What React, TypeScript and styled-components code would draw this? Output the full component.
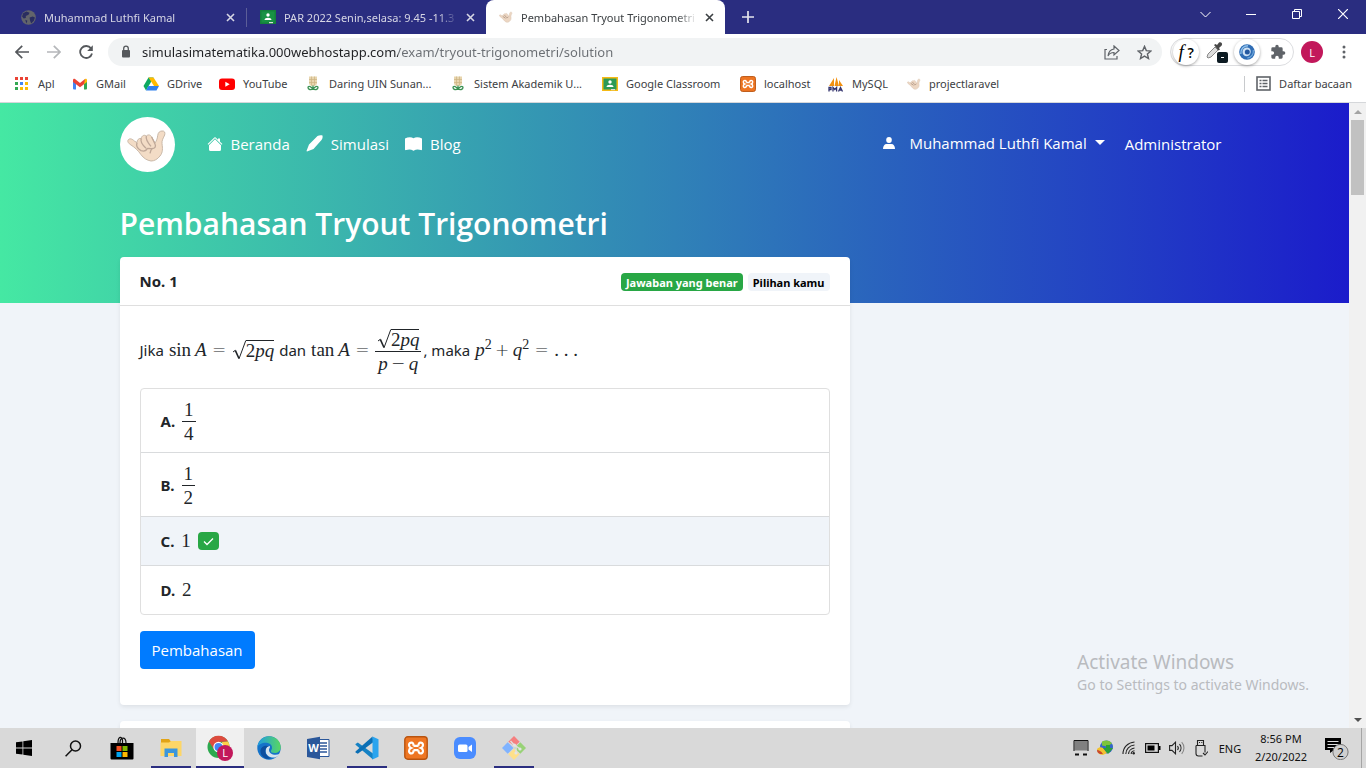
import React from "react";
import styled, { createGlobalStyle, css } from "styled-components";

const UI = `"Open Sans", "Noto Sans", sans-serif`;
const SMALL = `"Noto Sans", "Open Sans", sans-serif`;
const MATH = `"Liberation Serif", serif`;

const GlobalStyle = createGlobalStyle`
  *, *::before, *::after { box-sizing: border-box; }
  html, body, #root { height: 100%; }
  body { margin: 0; overflow: hidden; font-family: ${UI}; color: #212529; }
  button { font: inherit; color: inherit; background: none; border: 0; padding: 0; }
  a { color: inherit; text-decoration: none; }
  svg { display: block; flex: none; }
`;

/* ---------- shell ---------- */
const Screen = styled.div`
  display: flex;
  flex-direction: column;
  height: 100vh;
  min-height: 0;
`;

/* ---------- tab strip ---------- */
const TabStrip = styled.header`
  display: flex;
  flex: none;
  height: 34px;
  padding-left: 8px;
  background: #2a2d80;
  font-family: ${SMALL};
`;
const Tab = styled.div<{ $active?: boolean; $divided?: boolean }>`
  display: flex;
  align-items: center;
  flex: 0 1 239px;
  min-width: 0;
  height: 34px;
  padding: 0 11px 0 13px;
  gap: 8px;
  font-size: 11px;
  color: #d6d6e4;
  border-right: ${(p) => (p.$divided ? "1px solid #56589a" : "0")};
  border-image: ${(p) => (p.$divided ? "linear-gradient(#2a2d80 24%, #5c5e98 24%, #5c5e98 78%, #2a2d80 78%) 1" : "none")};
  ${(p) =>
    p.$active &&
    css`
      background: #fff;
      color: #3c4043;
      border-radius: 8px 8px 0 0;
    `}
`;
const TabTitle = styled.button`
  flex: 1;
  min-width: 0;
  text-align: left;
  white-space: nowrap;
  overflow: hidden;
  mask-image: linear-gradient(90deg, #000 calc(100% - 20px), transparent);
`;
const IconButton = styled.button<{ $w?: number }>`
  display: flex;
  align-items: center;
  justify-content: center;
  flex: none;
  width: ${(p) => p.$w ?? 32}px;
`;
const WindowControls = styled.div`
  display: flex;
  height: 28px;
  margin-left: auto;
  color: #fff;
`;

/* ---------- toolbar ---------- */
const Toolbar = styled.div`
  display: flex;
  align-items: center;
  flex: none;
  height: 36px;
  padding: 0 6px;
  background: #fff;
  color: #5f6368;
`;
const Omnibox = styled.label`
  display: flex;
  align-items: center;
  flex: 1;
  height: 28px;
  margin: 0 8px 0 6px;
  padding: 0 2px 0 12px;
  border-radius: 14px;
  background: #f1f3f4;
`;
const Url = styled.input`
  flex: 1;
  min-width: 0;
  margin-left: 10px;
  padding: 0;
  border: 0;
  outline: 0;
  font: 13px ${SMALL};
  color: transparent;
  background: linear-gradient(90deg, #202124 256px, #6a6e73 256px);
  background-clip: text;
  -webkit-background-clip: text;
`;
const Extensions = styled.div`
  display: flex;
  align-items: center;
  justify-content: space-around;
  width: 124px;
  height: 28px;
  margin-right: 2px;
  border: 1px solid #dcdde0;
  border-radius: 14px;
`;
const ExtButton = styled.button<{ $raised?: boolean }>`
  display: flex;
  align-items: center;
  justify-content: center;
  width: 26px;
  height: 26px;
  border-radius: 50%;
  box-shadow: ${(p) => (p.$raised ? "0 1px 3px rgba(0,0,0,.35)" : "none")};
`;
const FontMark = styled.span`
  color: #000;
  font: 600 14px/26px ${UI};
`;
const FontMarkF = styled.i`
  font: italic 400 19px/26px ${MATH};
`;
const Avatar = styled.span`
  display: flex;
  align-items: center;
  justify-content: center;
  width: 22px;
  height: 22px;
  border-radius: 50%;
  background: #c2185b;
  color: #fff;
  font-size: 11px;
`;

/* ---------- bookmarks ---------- */
const Bookmarks = styled.nav`
  display: flex;
  align-items: center;
  flex: none;
  height: 33px;
  padding: 0 14px 5px;
  background: #fff;
  border-bottom: 1px solid #d5d7da;
  font-family: ${SMALL};
  font-size: 11px;
  color: #3c4043;
`;
const Bookmark = styled.a<{ $w: number }>`
  display: flex;
  align-items: center;
  gap: 8px;
  flex: 0 1 ${(p) => p.$w}px;
  white-space: nowrap;
`;
const ReadingList = styled.button`
  display: flex;
  align-items: center;
  gap: 8px;
  height: 16px;
  margin-left: auto;
  padding-left: 11px;
  border-left: 1px solid #c8cacd;
  white-space: nowrap;
`;

/* ---------- page ---------- */
const Viewport = styled.div`
  position: relative;
  display: flex;
  flex: 1;
  min-height: 0;
  background: #f0f4f9;
`;
const Page = styled.main`
  flex: 1;
  min-width: 0;
  overflow: hidden;
  background: linear-gradient(90deg, #45e8a3, #1b1ccb) top / 100% 200px no-repeat;
`;
const Container = styled.div`
  max-width: 1140px;
  margin: 0 auto;
  padding: 14px 15px 0;
`;
const SiteNav = styled.nav`
  display: flex;
  align-items: center;
  height: 55px;
  padding-right: 8px;
  color: #fff;
  font-size: 15px;
`;
const Logo = styled.a`
  width: 55px;
  height: 55px;
  margin-right: 32px;
  border-radius: 50%;
  background: #fff;
  overflow: hidden;
`;
const NavLink = styled.a`
  display: flex;
  align-items: center;
  gap: 8px;
  margin-right: 16px;
  padding-bottom: 2px;
`;
const PlainLink = styled.a`
  padding-bottom: 2px;
`;
const UserButton = styled.button`
  display: flex;
  align-items: center;
  margin: 0 20px 0 auto;
  padding-bottom: 4px;
  gap: 14px;
`;
const Caret = styled.span`
  margin-left: -6px;
  border: 5px solid transparent;
  border-top-color: #fff;
  border-bottom: 0;
`;
const Title = styled.h1`
  margin: 32px 0 14px;
  font-size: 30px;
  line-height: 39px;
  font-weight: 600;
  color: #fff;
`;
const Card = styled.section`
  max-width: 730px;
  margin-bottom: 16px;
  border-radius: 4px;
  background: #fff;
  box-shadow: 0 2px 4px rgba(0, 0, 0, 0.08);
`;
const CardHeader = styled.header`
  display: flex;
  align-items: center;
  gap: 5px;
  height: 49px;
  padding: 2px 20px 0;
  border-bottom: 1px solid #dfdfdf;
`;
const Number = styled.h2`
  margin: 0 auto 0 0;
  padding-bottom: 2px;
  font: 700 15px ${SMALL};
`;
const Badge = styled.span<{ $success?: boolean }>`
  display: inline-flex;
  align-items: center;
  height: 18px;
  padding: 0 5px;
  border-radius: 4px;
  font: 700 11px ${SMALL};
  color: ${(p) => (p.$success ? "#fff" : "#000")};
  background: ${(p) => (p.$success ? "#28a745" : "#f0f4f9")};
`;
const CardBody = styled.div`
  padding: 22px 20px 36px;
`;
const Question = styled.p`
  display: flex;
  align-items: center;
  gap: 5px;
  height: 44px;
  margin: 0 0 16px;
  font: 15px ${SMALL};
  white-space: nowrap;
`;
const Phrase = styled.span`
  display: inline-flex;
  align-items: center;
  gap: 2px;
`;
const Choices = styled.ol`
  margin: 0 0 16px;
  padding: 0;
  list-style: none;
  border: 1px solid #dfdfdf;
  border-radius: 4px;
`;
const Choice = styled.li<{ $chosen?: boolean }>`
  display: flex;
  align-items: center;
  gap: 7px;
  min-height: 48px;
  padding: 10px 20px;
  font: 15px ${SMALL};
  background: ${(p) => (p.$chosen ? "#f0f4f9" : "transparent")};
  & + & { border-top: 1px solid #d9dbdd; min-height: 49px; }
`;
const Primary = styled.button`
  display: block;
  height: 38px;
  padding: 0 12px;
  border-radius: 4px;
  background: #007bff;
  color: #fff;
  font-size: 15px;
`;

/* ---------- math ---------- */
const MathRun = styled.span`
  display: inline-flex;
  align-items: center;
  font: 19px/24px ${MATH};
`;
const Op = styled.span<{ $binary?: boolean }>`
  width: 15px;
  margin: 0 ${(p) => (p.$binary ? 3 : 5)}px;
  font: 200 17px/24px "DejaVu Sans", sans-serif;
  text-align: center;
`;
const Fn = styled.span`
  margin-right: 4px;
`;
const Sup = styled.sup`
  align-self: flex-start;
  font-size: 14px;
  line-height: 14px;
`;
const FracBox = styled.span`
  display: inline-flex;
  flex-direction: column;
  align-items: center;
  font: 19px/19px ${MATH};
`;
const FracPart = styled.span<{ $bottom?: boolean }>`
  display: flex;
  align-items: center;
  justify-content: center;
  align-self: stretch;
  height: ${(p) => (p.$bottom ? 21 : 22)}px;
  padding: ${(p) => (p.$bottom ? "3px 2px 0" : "0 2px 2px")};
  border-top: ${(p) => (p.$bottom ? "1px solid #212529" : "0")};
`;
const Root = styled.span`
  display: inline-flex;
`;
const Radicand = styled.span`
  border-top: 1px solid #212529;
  height: 20px;
  line-height: 19px;
`;
const MinusOp = styled(Op)`
  line-height: 19px;
`;

const Sqrt = ({ children }: { children: React.ReactNode }) => (
  <Root>
    <svg width="14" height="20" viewBox="0 0 14 20" fill="none" stroke="#212529">
      <path d="M1 12 3.300 10.300" strokeWidth="1" />
      <path d="M3.300 10.300 7 18.500" strokeWidth="1.600" />
      <path d="M7 18.800 13.800.5" strokeWidth="1" />
    </svg>
    <Radicand>{children}</Radicand>
  </Root>
);
const Frac = ({ top, bottom }: { top: React.ReactNode; bottom: React.ReactNode }) => (
  <FracBox>
    <FracPart>{top}</FracPart>
    <FracPart $bottom>{bottom}</FracPart>
  </FracBox>
);

/* ---------- scrollbar & watermark ---------- */
const Scrollbar = styled.div`
  display: flex;
  flex-direction: column;
  align-items: center;
  flex: none;
  width: 17px;
  background: #f1f1f1;
`;
const ScrollArrow = styled.button`
  display: flex;
  align-items: center;
  justify-content: center;
  width: 17px;
  height: 17px;
`;
const Thumb = styled.div`
  width: 13px;
  height: 75px;
  margin-bottom: auto;
  background: #c1c1c1;
`;
const Watermark = styled.aside`
  position: absolute;
  right: 57px;
  bottom: 33px;
  color: #b9bbbf;
  font: 14px/20px ${SMALL};
`;
const WatermarkTitle = styled.div`
  font-size: 19px;
  line-height: 25px;
`;

/* ---------- taskbar ---------- */
const Taskbar = styled.footer`
  display: flex;
  flex: none;
  gap: 1px;
  height: 40px;
  background: #d9d9d9;
  color: #111;
  font-family: ${SMALL};
`;
const Task = styled.button<{ $active?: boolean; $open?: boolean }>`
  display: flex;
  align-items: center;
  justify-content: center;
  width: 48px;
  height: 40px;
  background: ${(p) => (p.$active ? "#f0f0f0" : p.$open ? "linear-gradient(#2b2e80, #2b2e80) bottom / 40px 2px no-repeat" : "none")};
  box-shadow: ${(p) => (p.$active ? "inset 0 -2px #2b2e80" : "none")};
`;
const Tray = styled.div`
  display: flex;
  align-items: center;
  margin-left: auto;
  font-size: 11px;
`;
const TrayButton = styled.button`
  display: flex;
  align-items: center;
  justify-content: center;
  width: 24px;
  height: 40px;
`;
const Lang = styled.button`
  width: 34px;
`;
const Clock = styled.time`
  width: 68px;
  text-align: center;
  line-height: 18px;
  padding-bottom: 1px;
`;
const Notify = styled.button`
  display: flex;
  justify-content: center;
  align-items: center;
  width: 47px;
  height: 40px;
  padding-right: 2px;
  border-right: 1px solid #a5a5a5;
  margin-right: 4px;
`;

/* ---------- drawings ---------- */
const HAND = "M25 68c5-5 12-2 18 4l8 5c0-8 5-14 13-13 1-8 9-12 15-7 6-6 13-3 16 3l10 18c4-6 7-12 8-22 1-10 7-14 13-14 8-1 10 5 8 12-4 9-9 16-8 26 2 14 3 26-6 37-8 10-17 15-27 15-12-2-22-8-30-19-8-12-19-22-30-29-8-5-12-11-8-16z";
const Hand = ({ size }: { size: number }) => (
  <svg width={size} height={size} viewBox="0 0 165 165">
    <path d={HAND} fill="#f3dcc6" stroke="#c9b8a8" strokeWidth="3" />
    <path d="M51 77c-3 8 2 18 12 24 9 3 16 0 19-7M64 64c-4 8 4 20 14 30M79 57c-2 8 6 22 14 31M95 60l10 21c4 9-1 13-9 14l-14-1M98 94c-4 3-7 9-8 15" fill="none" stroke="#bfa898" strokeWidth="4" />
  </svg>
);
const MiniHand = () => (
  <svg width="14" height="14" viewBox="20 30 124 110">
    <path d={HAND} fill="#ecd6c2" stroke="#d8c4b2" strokeWidth="4" />
    <path d="M54 80l24 16M68 68l22 24M104 82l-14 14" stroke="#ad9382" strokeWidth="7" fill="none" />
  </svg>
);
const Close = () => (
  <svg width="9" height="9" viewBox="0 0 9 9" stroke="currentColor" strokeWidth="1.6"><path d="M1 1l7 7M8 1L1 8" /></svg>
);
const Classroom = ({ frame, fill }: { frame: string; fill: string }) => (
  <svg width="16" height="16" viewBox="0 0 16 16">
    <path d="M0 1h16v14H0z" fill={frame} /><path d="M1.500 2.500h13v11h-13z" fill={fill} />
    <circle cx="8" cy="6" r="1.700" fill="#fff" /><path d="M4.500 11c0-3 7-3 7 0z" fill="#fff" />
    <path d="M9 13h4v1.200H9z" fill="#ddd" />
  </svg>
);
const Flower = () => (
  <svg width="16" height="16" viewBox="0 0 16 16">
    <path d="M4 .5h8V8l-2 2H6L4 8z" fill="#e8d5ae" />
    <path d="M4 3.500h8M4 6.500h8M6.500.5v9M9.500.5v9" stroke="#cdb482" strokeWidth=".7" />
    <path d="M8 9.500v4.500M8 13.500c-1-3-5-4-5-2s3 3 5 1M8 13.500c1-3 5-4 5-2s-3 3-5 1" fill="none" stroke="#3a9152" strokeWidth="1.300" />
  </svg>
);
const Xampp = ({ size }: { size: number }) => (
  <svg width={size} height={size} viewBox="0 0 24 24">
    <rect x=".8" y=".8" width="22.400" height="22.400" rx="3" fill="#ee7623" stroke="#b95410" strokeWidth="1.400" />
    <path d="M9.500 9.800h5M9.500 14.200h5M9.500 9.800C10 5.600 5 5.800 5 9c0 1.800 1 2.600 2 3-1 .4-2 1.200-2 3 0 3.200 5 3.400 4.500-.8M14.500 9.800C14 5.600 19 5.800 19 9c0 1.800-1 2.600-2 3 1 .4 2 1.200 2 3 0 3.200-5 3.400-4.500-.8" fill="none" stroke="#fff" strokeWidth="2.200" />
  </svg>
);

const bookmarks: { label: string; w: number; icon: React.ReactNode }[] = [
  { label: "Apl", w: 58, icon: (
    <svg width="16" height="16" viewBox="1 1 16 16">
      {["#ea4335", "#ea4335", "#ea4335", "#34a853", "#4285f4", "#fbbc05", "#34a853", "#fbbc05", "#fbbc05"].map((c, i) => (
        <rect key={i} x={2 + (i % 3) * 5} y={2 + Math.floor(i / 3) * 5} width="3" height="3" fill={c} />
      ))}
    </svg>) },
  { label: "GMail", w: 71, icon: (
    <svg width="16" height="16" viewBox="0 0 16 16">
      <path d="M1 4h3v9.500H2a1 1 0 0 1-1-1z" fill="#4285f4" /><path d="M12 4h3v8.500a1 1 0 0 1-1 1h-2z" fill="#34a853" />
      <path d="M12 4.500 13 3c1-.8 2 0 2 1v2l-3 2.300z" fill="#fbbc04" /><path d="M1 4c0-1 1-1.800 2-1l5 4 5-4-1 5.300-4 3-4-3L1 6z" fill="#ea4335" />
    </svg>) },
  { label: "GDrive", w: 76, icon: (
    <svg width="16" height="16" viewBox="0 0 16 16">
      <path d="M5.500 1.500h5L8 6 3 14.500.5 10z" fill="#0da960" /><path d="M5.500 1.500h5L16 10h-5z" fill="#ffba00" /><path d="M5.300 10H16l-2.500 4.500H3z" fill="#2f80ed" />
    </svg>) },
  { label: "YouTube", w: 86, icon: (
    <svg width="16" height="16" viewBox="0 0 16 16"><rect y="2.500" width="16" height="11.500" rx="3" fill="#f00" /><path d="M6.300 5.700 10.700 8.200 6.300 10.700z" fill="#fff" /></svg>) },
  { label: "Daring UIN Sunan...", w: 145, icon: <Flower /> },
  { label: "Sistem Akademik U...", w: 152, icon: <Flower /> },
  { label: "Google Classroom", w: 138, icon: <Classroom frame="#f5ba15" fill="#2c9a56" /> },
  { label: "localhost", w: 88, icon: <Xampp size={16} /> },
  { label: "MySQL", w: 79, icon: (
    <svg width="16" height="16" viewBox="0 0 16 16">
      <path d="M1 10 6 2v8zM6.500 10 8.500 1l2.500 9zM11 10l0-6 4 6z" fill="#f29111" />
      <path d="M1 15.500v-4h2v2H1.500M5 15.500v-4l1.800 2 1.800-2v4M10.500 15.500l2-4 2 4M11.500 14h2" fill="none" stroke="#34346e" strokeWidth="1.300" />
    </svg>) },
  { label: "projectlaravel", w: 100, icon: <MiniHand /> },
];

const choices: { key: string; value: React.ReactNode; correct?: boolean }[] = [
  { key: "A", value: <Frac top="1" bottom="4" /> },
  { key: "B", value: <Frac top="1" bottom="2" /> },
  { key: "C", value: "1", correct: true },
  { key: "D", value: "2" },
];

export default function App() {
  return (
    <Screen>
      <GlobalStyle />
      <TabStrip>
        <Tab $divided>
          <svg width="15" height="15" viewBox="0 0 14 14"><circle cx="7" cy="7" r="6.800" fill="#62646b" /><path d="M2 3l3-1.500 3 1-1 2-2.500 1v2l-2 .5L1 6zM8 7l3-1 2 1-1 3-2.500 2.500L8.500 10zM4 9l2 1-1 2.500z" fill="#2a2d60" /></svg>
          <TabTitle>Muhammad Luthfi Kamal</TabTitle>
          <button aria-label="Close tab"><Close /></button>
        </Tab>
        <Tab>
          <Classroom frame="#14803c" fill="#189244" />
          <TabTitle>PAR 2022 Senin,selasa: 9.45 -11.3</TabTitle>
          <button aria-label="Close tab"><Close /></button>
        </Tab>
        <Tab $active>
          <MiniHand />
          <TabTitle>Pembahasan Tryout Trigonometri</TabTitle>
          <button aria-label="Close tab"><Close /></button>
        </Tab>
        <IconButton $w={46} aria-label="New tab">
          <svg width="12" height="12" viewBox="0 0 12 12" stroke="#e4e4ec" strokeWidth="1.700"><path d="M6 0v12M0 6h12" /></svg>
        </IconButton>
        <WindowControls>
          <IconButton $w={46} aria-label="Search tabs"><svg width="11" height="7" viewBox="0 0 11 7" fill="none" stroke="currentColor"><path d="M.5 1l5 5 5-5" /></svg></IconButton>
          <IconButton $w={46} aria-label="Minimize"><svg width="10" height="2" viewBox="0 0 10 2"><path d="M0 1h10v1H0z" fill="currentColor" /></svg></IconButton>
          <IconButton $w={46} aria-label="Restore"><svg width="10" height="10" viewBox="0 0 10 10" fill="none" stroke="currentColor"><path d="M.5 2.500h7v7h-7zM2.500 2.500v-2h7v7h-2" /></svg></IconButton>
          <IconButton $w={46} aria-label="Close"><svg width="10" height="10" viewBox="0 0 10 10" stroke="currentColor" strokeWidth="1.200"><path d="M0 0l10 10M10 0L0 10" /></svg></IconButton>
        </WindowControls>
      </TabStrip>

      <Toolbar>
        <IconButton aria-label="Back"><svg width="14" height="14" viewBox="0 0 14 14" fill="none" stroke="#55585c" strokeWidth="1.700"><path d="M14 7H1M7.200.8 1 7l6.200 6.200" /></svg></IconButton>
        <IconButton aria-label="Forward"><svg width="14" height="14" viewBox="0 0 14 14" fill="none" stroke="#b5b7ba" strokeWidth="1.700"><path d="M0 7h13M6.800.8 13 7l-6.200 6.200" /></svg></IconButton>
        <IconButton aria-label="Reload"><svg width="14" height="14" viewBox="0 0 14 14" fill="none" stroke="#55585c" strokeWidth="1.800"><path d="M12 3.400A6 6 0 1 0 13 8.500" /><path d="M13.800.3v5.600H8.200z" fill="#55585c" stroke="none" /></svg></IconButton>
        <Omnibox>
          <svg width="12" height="14" viewBox="0 0 12 14"><rect x="2" y="5" width="8" height="7.500" rx="1" fill="#55585c" /><path d="M3.700 5V3.500a2.300 2.300 0 0 1 4.600 0V5" fill="none" stroke="#55585c" strokeWidth="1.300" /></svg>
          <Url aria-label="Address" defaultValue="simulasimatematika.000webhostapp.com/exam/tryout-trigonometri/solution" />
          <IconButton aria-label="Share"><svg width="16" height="15" viewBox="0 0 16 15" fill="none" stroke="currentColor" strokeWidth="1.200"><path d="M3 4.500H1V14h12v-3" /><path d="M10 1l5 4.500-5 4.500V7.500C7 7.500 5.200 8.500 4 11c.4-3.500 2.500-6.500 6-7z" /></svg></IconButton>
          <IconButton aria-label="Bookmark"><svg width="15" height="15" viewBox="0 0 15 15" fill="none" stroke="currentColor" strokeWidth="1.400"><path d="M7.500 1.400l1.800 4.200 4.600.4-3.500 3 1.100 4.500-4-2.400-4 2.400L4.600 9 1.100 6l4.600-.4z" /></svg></IconButton>
        </Omnibox>
        <Extensions>
          <ExtButton $raised aria-label="Font finder"><FontMark><FontMarkF>f</FontMarkF> ?</FontMark></ExtButton>
          <ExtButton aria-label="Color picker"><svg width="22" height="22" viewBox="0 0 22 22"><path d="M1 16l1-3 7-7 3 3-7 7-3 1z" fill="#ddd" stroke="#888" /><path d="M8 4l1.500-1 1.500 1L13 1.500c2-1 4 1 2.700 3L13 7l1 1.500-1.500 1z" fill="#484848" /><rect x="11" y="11" width="11" height="11" rx="2" fill="#0c1a22" /><path d="M15 16h3v1h-3z" fill="#fff" /></svg></ExtButton>
          <ExtButton $raised aria-label="Extension"><svg width="18" height="18" viewBox="0 0 18 18"><circle cx="9" cy="9" r="7.800" fill="#2f6db5" /><path d="M9 4.500c4 0 5 5 2 8-3 2-6.500 0-6.500-3.500C4.500 6 6.500 4.500 9 4.500z" fill="#cfe2f4" /><circle cx="9.300" cy="9" r="2.500" fill="#2559a0" /><path d="M2.800 11C2.500 6 5.500 2.800 10 2.800" fill="none" stroke="#8fc0ea" strokeWidth="1.400" /><path d="M15.300 7c.6 4-2 7.600-6 8.200" fill="none" stroke="#6fa8dc" strokeWidth="1.200" /></svg></ExtButton>
          <ExtButton aria-label="Extensions"><svg width="16" height="16" viewBox="0 0 24 24" fill="#5f6368"><path d="M20.500 11H19V7a2 2 0 0 0-2-2h-4V3.500a2.500 2.500 0 0 0-5 0V5H4a2 2 0 0 0-2 2v3.800h1.500a2.700 2.700 0 0 1 0 5.400H2V20a2 2 0 0 0 2 2h3.800v-1.500a2.700 2.700 0 0 1 5.400 0V22H17a2 2 0 0 0 2-2v-4h1.500a2.500 2.500 0 0 0 0-5z" /></svg></ExtButton>
        </Extensions>
        <IconButton aria-label="Profile"><Avatar>L</Avatar></IconButton>
        <IconButton aria-label="Menu"><svg width="4" height="14" viewBox="0 0 4 14" fill="currentColor"><circle cx="2" cy="2" r="1.500" /><circle cx="2" cy="7" r="1.500" /><circle cx="2" cy="12" r="1.500" /></svg></IconButton>
      </Toolbar>

      <Bookmarks>
        {bookmarks.map((b) => (
          <Bookmark key={b.label} href="#" $w={b.w}>{b.icon}{b.label}</Bookmark>
        ))}
        <ReadingList>
          <svg width="15" height="15" viewBox="0 0 15 15" fill="none" stroke="#5f6368"><rect x="1" y="1" width="13" height="13" strokeWidth="1.600" /><path d="M3.500 4.500h2M3.500 7.500h2M3.500 10.500h2M6.500 4.500h5M6.500 7.500h5M6.500 10.500h5" strokeWidth="1.400" /></svg>
          Daftar bacaan
        </ReadingList>
      </Bookmarks>

      <Viewport>
        <Page>
          <Container>
            <SiteNav>
              <Logo href="#" aria-label="Home"><Hand size={55} /></Logo>
              <NavLink href="#">
                <svg width="16" height="16" viewBox="0 0 16 16" fill="#fff"><path d="M8 3.300l6 6v4.200a1.500 1.500 0 0 1-1.500 1.500h-9A1.500 1.500 0 0 1 2 13.500V9.300z" /><path d="M13 2.500V6l-2-2V2.500zM7.300 1.500a1 1 0 0 1 1.400 0l6.700 6.600-.7.7L8 2.200 1.400 8.800l-.8-.7z" /></svg>
                Beranda
              </NavLink>
              <NavLink href="#">
                <svg width="17" height="17" viewBox="0 0 17 17" fill="#fff"><path d="M11.500 1C13 .2 15 .2 16.500.5c.3 1.500 0 3.500-1 4.500L7.500 14 1 16.500l-.5-.5L3 9.500z" /></svg>
                Simulasi
              </NavLink>
              <NavLink href="#">
                <svg width="17" height="16" viewBox="0 0 17 16" fill="#fff"><path d="M0 2.500C3 .8 6.500.8 8.500 2.200 10.500.8 14 .8 17 2.500v11c0 .8-.7.900-1.200.6-2-1-5-1-6.800.4-.3.300-.7.300-1 0-1.800-1.400-4.800-1.400-6.800-.4-.5.300-1.200.2-1.200-.6z" /></svg>
                Blog
              </NavLink>
              <UserButton>
                <svg width="12" height="12" viewBox="0 0 12 12" fill="#fff"><ellipse cx="6" cy="3" rx="2.800" ry="3" /><path d="M0 12c0-3 1.500-5 3.500-5h5C10.500 7 12 9 12 12z" /></svg>
                Muhammad Luthfi Kamal
                <Caret />
              </UserButton>
              <PlainLink href="#">Administrator</PlainLink>
            </SiteNav>
            <Title>Pembahasan Tryout Trigonometri</Title>
            <Card>
              <CardHeader>
                <Number>No. 1</Number>
                <Badge $success>Jawaban yang benar</Badge>
                <Badge>Pilihan kamu</Badge>
              </CardHeader>
              <CardBody>
                <Question>
                  <span>Jika</span>
                  <MathRun><Fn>sin</Fn><i>A</i><Op>=</Op><Sqrt>2<i>pq</i></Sqrt></MathRun>
                  <span>dan</span>
                  <Phrase>
                    <MathRun><Fn>tan</Fn><i>A</i><Op>=</Op>
                      <Frac top={<Sqrt>2<i>pq</i></Sqrt>} bottom={<><i>p</i><MinusOp $binary>−</MinusOp><i>q</i></>} />
                    </MathRun>
                    <span>, maka</span>
                  </Phrase>
                  <MathRun><i>p</i><Sup>2</Sup><Op $binary>+</Op><i>q</i><Sup>2</Sup><Op>=</Op>. . .</MathRun>
                </Question>
                <Choices>
                  {choices.map((c) => (
                    <Choice key={c.key} $chosen={c.correct}>
                      <b>{c.key}.</b>
                      <MathRun>{c.value}</MathRun>
                      {c.correct && (
                        <Badge $success>
                          <svg width="11" height="9" viewBox="0 0 11 9" fill="none" stroke="#fff" strokeWidth="1.300"><path d="M1 4.500l3 3L10 1.500" /></svg>
                        </Badge>
                      )}
                    </Choice>
                  ))}
                </Choices>
                <Primary>Pembahasan</Primary>
              </CardBody>
            </Card>
            <Card><CardHeader /></Card>
          </Container>
        </Page>
        <Watermark>
          <WatermarkTitle>Activate Windows</WatermarkTitle>
          Go to Settings to activate Windows.
        </Watermark>
        <Scrollbar>
          <ScrollArrow aria-label="Scroll up"><svg width="8" height="4" viewBox="0 0 8 4"><path d="M0 4l4-4 4 4z" fill="#a3a3a3" /></svg></ScrollArrow>
          <Thumb />
          <ScrollArrow aria-label="Scroll down"><svg width="8" height="4" viewBox="0 0 8 4"><path d="M0 0l4 4 4-4z" fill="#505050" /></svg></ScrollArrow>
        </Scrollbar>
      </Viewport>

      <Taskbar>
        <Task aria-label="Start"><svg width="16" height="16" viewBox="0 0 16 16"><path d="M0 2.300l6.500-.9v6.100H0zM7.300 1.300 16 0v7.500H7.300zM0 8.400h6.500v6.200L0 13.700zM7.300 8.400H16V16l-8.700-1.200z" /></svg></Task>
        <Task aria-label="Search"><svg width="17" height="17" viewBox="0 0 17 17" fill="none" stroke="#111" strokeWidth="1.500"><circle cx="10.500" cy="6" r="5" /><path d="M7 9.800.6 16.200" /></svg></Task>
        <Task aria-label="Store"><svg width="24" height="24" viewBox="0 0 24 24"><path d="M.5 7h23v15.500a1 1 0 0 1-1 1h-21a1 1 0 0 1-1-1z" /><path d="M8 7c0-7 4-7 4.500-3V7M10 7c0-6 6-7 6 0" fill="none" stroke="#111" strokeWidth="1.200" /><path d="M6.500 10h5v5h-5z" fill="#f25022" /><path d="M12.500 10h5v5h-5z" fill="#7fba00" /><path d="M6.500 16h5v5h-5z" fill="#00a4ef" /><path d="M12.500 16h5v5h-5z" fill="#ffb900" /></svg></Task>
        <Task $open aria-label="File Explorer"><svg width="22" height="20" viewBox="0 0 22 20"><path d="M1 1h8l1.500 2H21v15H1z" fill="#e2a416" /><path d="M.5 4.500 9 4.500l2-1.500h10.500v15H.5z" fill="#fdd667" /><path d="M4.500 10.500h13V19h-3.500v-4H8v4H4.500z" fill="#3c96dc" /></svg></Task>
        <Task $active aria-label="Chrome"><svg width="26" height="26" viewBox="0 0 26 26"><circle cx="11.500" cy="12" r="11" fill="#2da94f" /><path d="M1.900 6.500A11 11 0 0 1 21.100 6.500L11.500 7 7 14.500z" fill="#dd4b3e" /><path d="M21.100 6.500A11 11 0 0 1 11.500 23l4.500-8.500-1-7.500z" fill="#fdd04a" /><circle cx="11.500" cy="12" r="5.200" fill="#fff" /><circle cx="11.500" cy="12" r="4" fill="#4285f4" /><circle cx="18" cy="18" r="8" fill="#c2185b" /><text x="18" y="22" textAnchor="middle" fontSize="11" fill="#fff" fontFamily="Open Sans, sans-serif">L</text></svg></Task>
        <Task aria-label="Edge"><svg width="24" height="24" viewBox="0 0 24 24"><defs><linearGradient id="edgeTop"><stop offset="0" stopColor="#1e9be2" /><stop offset="1" stopColor="#58d860" /></linearGradient></defs><circle cx="12" cy="12" r="11.700" fill="#1573c9" /><path d="M.4 11C1.500 4 6.500.3 12 .3c7 0 11.700 5.200 11.700 10.700 0 4-3 6-6.200 6-2.500 0-4-1-3.500-2.300.6-1 1-1.700 1-3C15 8.500 12 6.700 8.500 6.700 5 6.700 1.500 8.500.4 11z" fill="url(#edgeTop)" /><path d="M10 11c-3 4-1 9.500 5 10.500 3 .4 5.500-.5 7.500-3.500-5 2-10.500 0-10.500-4 0-1.500 1-2 1-3.500-1-.8-2-.5-3 .5z" fill="#d5e3ee" /><path d="M10 11c-3.500 4-1 9.800 4.500 11C9 24.500 3 20 3.500 14.500 4 10 9 8.500 12.500 10.500c-1-.3-2 0-2.500.5z" fill="#0d4f9e" /></svg></Task>
        <Task aria-label="Word"><svg width="24" height="24" viewBox="0 0 24 24"><path d="M12 3.500h11v17H12z" fill="#fff" stroke="#2b579a" /><path d="M14 7h7M14 10h7M14 13h7M14 16h7" stroke="#2b579a" strokeWidth="1.300" /><path d="M1 3 14 .8v22.400L1 21z" fill="#2b579a" /><text x="7.500" y="16" textAnchor="middle" fontSize="11" fontWeight="700" fill="#fff" fontFamily="Open Sans, sans-serif">W</text></svg></Task>
        <Task $open aria-label="Visual Studio Code"><svg width="24" height="24" viewBox="0 0 24 24"><path d="M.5 8 2.800 6.500 18 17.500v6L.5 8.800z" fill="#1481c4" /><path d="M.5 15.500 17.500.4 18.500 6 2.800 17.800.5 16.400z" fill="#0b6fb5" /><path d="M17.500.4 23.500 3.200v17.600l-6 2.800z" fill="#2ba4ee" /></svg></Task>
        <Task aria-label="XAMPP"><Xampp size={24} /></Task>
        <Task aria-label="Zoom"><svg width="24" height="24" viewBox="0 0 24 24"><rect x="1" y="1" width="22" height="22" rx="6" fill="#4a8cff" /><rect x="5" y="8.500" width="9.500" height="7.500" rx="1.500" fill="#fff" /><path d="M15.500 11l3.500-2.500V16l-3.500-2.500z" fill="#fff" /></svg></Task>
        <Task $open aria-label="Git Bash"><svg width="24" height="24" viewBox="0 0 24 24"><path d="M12 0l5.700 5.700-4.700 4.300L6.300 5.700z" fill="#f57f7f" /><path d="M5.700 6.300 11.500 12l-5.800 5.700L0 12z" fill="#80b3ff" /><path d="M18.300 6.300 24 12l-5.700 5.700L12.500 12z" fill="#98d277" /><path d="M12 12.800l5.500 5.500L12 24l-5.700-5.700z" fill="#ffe08a" /><path d="M8.500 5 14 11v7M14 10l4 3" fill="none" stroke="#e0e0e0" strokeWidth="1.400" /><circle cx="12.500" cy="9" r="1.600" fill="#e4e4e4" /><circle cx="14" cy="17" r="1.600" fill="#e4e4e4" /><circle cx="18" cy="13" r="1.600" fill="#e4e4e4" /></svg></Task>
        <Tray>
          <TrayButton aria-label="Touchpad"><svg width="16" height="16" viewBox="0 0 16 16"><path d="M1.500.5h13v10h-13z" fill="#808080" /><path d="M1 11V.5h14V11" fill="none" stroke="#111" /><path d="M2 14.500h4M10 14.500h4" stroke="#111" strokeWidth="2" /></svg></TrayButton>
          <TrayButton aria-label="Download manager"><svg width="16" height="16" viewBox="0 0 16 16"><circle cx="9.500" cy="7" r="6.500" fill="#3466c8" /><path d="M5 1.500c4-2 8-1 10 2l-5 3-5-1z" fill="#7cc43a" /><path d="M0 9c2-2 4-2 6-1l4 5-4 2C2 15 0 12 0 9z" fill="#f2c230" /><path d="M0 10c2 0 4 1 6 4H3c-2-1-3-2-3-4z" fill="#c8472f" /><path d="M6 8h3V5h4v3h3l-5 6z" fill="#28a138" /></svg></TrayButton>
          <TrayButton aria-label="Wi-Fi"><svg width="14" height="14" viewBox="0 0 14 14" fill="none" stroke="#222" strokeWidth="1.100"><path d="M1 13C1 6 6 1.500 12.500 1M3.800 13c0-5 3.700-8.500 8.700-9M6.600 13c0-3 2.500-5.500 5.900-6M9.200 13c0-1.500 1.300-3 3.300-3.200" /><circle cx="11.700" cy="12.300" r="1.200" fill="#222" stroke="none" /></svg></TrayButton>
          <TrayButton aria-label="Battery"><svg width="16" height="10" viewBox="0 0 16 10"><rect x=".6" y=".6" width="12.800" height="8.800" fill="none" stroke="#111" strokeWidth="1.200" /><path d="M2.500 2.500h7v5h-7zM14 3h1.500v4H14z" /></svg></TrayButton>
          <TrayButton aria-label="Volume"><svg width="16" height="14" viewBox="0 0 16 14" fill="none" stroke="#222" strokeWidth="1.100"><path d="M.6 4.600H3l3.500-3.400v11.600L3 9.400H.6z" /><path d="M8.500 5c1 1.200 1 2.800 0 4M10.500 3.200c2 2.200 2 5.400 0 7.600" /><path d="M12.700 1.200c3 3.300 3 8.300 0 11.600" stroke="#888" /></svg></TrayButton>
          <TrayButton aria-label="Eject USB"><svg width="14" height="17" viewBox="0 0 14 17" fill="none" stroke="#222" strokeWidth="1.100"><path d="M3.500 5.500v-5h6v5M2 5.500h9v7M2 5.500v8q0 2.500 2.500 2.500h4" /><path d="M5 2.500h1M7.300 2.500h1M9 13l2 2 3-3.500" /></svg></TrayButton>
          <Lang>ENG</Lang>
          <Clock>8:56 PM<br />2/20/2022</Clock>
          <Notify aria-label="2 notifications"><svg width="24" height="24" viewBox="0 0 24 24"><path d="M0 2h16v12H9l-4 3v-3H0z" /><path d="M2.500 5.500h11M2.500 8.500h11M2.500 11.500h7" stroke="#ddd" /><circle cx="15.500" cy="16" r="7.600" fill="#cfcfcf" stroke="#777" /><text x="15.500" y="20.500" textAnchor="middle" fontSize="12" fontFamily="Open Sans, sans-serif">2</text></svg></Notify>
        </Tray>
      </Taskbar>
    </Screen>
  );
}
